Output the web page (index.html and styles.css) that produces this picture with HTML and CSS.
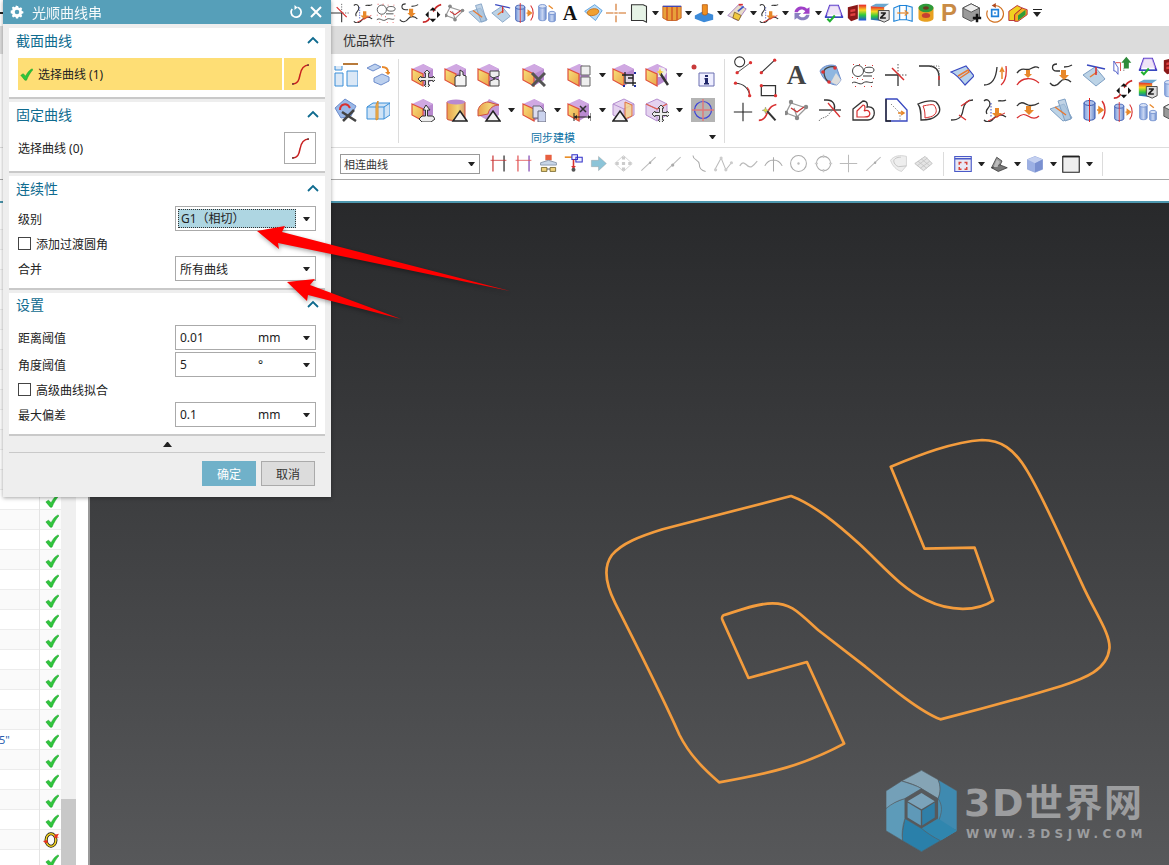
FILE: index.html
```
<!DOCTYPE html>
<html lang="zh">
<head>
<meta charset="utf-8">
<title>光顺曲线串</title>
<link rel="stylesheet" href="styles.css">
</head>
<body>
<svg class="sprite" xmlns="http://www.w3.org/2000/svg">
<defs>
<linearGradient id="gy" x1="0" y1="0" x2="1" y2="1"><stop offset="0" stop-color="#f7e27a"/><stop offset="1" stop-color="#eba24a"/></linearGradient>
<linearGradient id="gc" x1="0" y1="0" x2="1" y2="0"><stop offset="0" stop-color="#e9a04c"/><stop offset=".6" stop-color="#f2d677"/><stop offset="1" stop-color="#d59a70"/></linearGradient>
<linearGradient id="gb" x1="0" y1="0" x2="1" y2="0"><stop offset="0" stop-color="#7f9fdc"/><stop offset=".5" stop-color="#c8d6f2"/><stop offset="1" stop-color="#6d8dcc"/></linearGradient>
<linearGradient id="gr" x1="0" y1="0" x2="0" y2="1"><stop offset="0" stop-color="#e8202a"/><stop offset=".35" stop-color="#f5d920"/><stop offset=".65" stop-color="#2ecb3c"/><stop offset="1" stop-color="#2050e0"/></linearGradient>
</defs>
<symbol id="cube" viewBox="0 0 24 24"><path d="M12 1 22 6v11l-10 6z" fill="#b98ad0"/><path d="M12 1 1 6l11 5 10-5z" fill="#d0a8e2"/><path d="M1 6l11 5v12L1 17z" fill="url(#gy)" stroke="#e0503c" stroke-width="1.2"/></symbol>
<symbol id="arr4" viewBox="0 0 24 24"><path d="M16 7l3 3h-1.500v4.500H22V13l3 3-3 3v-1.500h-4.500V22H19l-3 3-3-3h1.500v-4.500H10V19l-3-3 3-3v1.500h4.500V10H13z" fill="#eee" stroke="#444"/></symbol>
<symbol id="tri" viewBox="0 0 24 24"><path d="M16 13l7 10H9z" fill="#f2f2f2" stroke="#222" stroke-width="1.500"/></symbol>
<symbol id="cmove" viewBox="0 0 24 24"><use href="#cube"/><use href="#arr4"/></symbol>
<symbol id="chand" viewBox="0 0 24 24"><use href="#cube"/><path d="M11 14v9h11V13l-3-1V9l-3-2v6l-2-1z" fill="#f4f4f4" stroke="#333"/></symbol>
<symbol id="cstrip" viewBox="0 0 24 24"><use href="#cube"/><path d="M13 8h9v5l-6 2 6 2v6h-9v-5l5-2-5-3z" fill="#eee" stroke="#444"/></symbol>
<symbol id="cx" viewBox="0 0 24 24"><use href="#cube"/><path d="M10 10l13 13M23 10 10 23" stroke="#555" stroke-width="3"/></symbol>
<symbol id="cpanel" viewBox="0 0 24 24"><use href="#cube"/><path d="M14 3h9v9h-9zM14 14h9v9h-9z" fill="#eee" stroke="#666"/></symbol>
<symbol id="ccrop" viewBox="0 0 24 24"><use href="#cube"/><path d="M12 12h9v9h-9z" fill="#eee" fill-opacity=".8"/><path d="M10 12h11v11M13 9v11h11M16 15h5" fill="none" stroke="#222" stroke-width="1.300"/><path d="M11 22h2v2h-2zM22 22h2v2h-2zM22 9h2v2h-2z" fill="#2030a0"/></symbol>
<symbol id="cwand" viewBox="0 0 24 24"><use href="#cube"/><path d="M14 4l5 1 3 4-3 5h-6z" fill="#eee"/><path d="M15 10l8 12" stroke="#333" stroke-width="2.500"/><path d="M15 5l1 3 3 1-3 1-1 3-1-3-3-1 3-1z" fill="#f5d040"/></symbol>
<symbol id="info" viewBox="0 0 24 24"><circle cx="3" cy="4" r="2.500" fill="#c83a3a"/><path d="M8 10h15v13H8z" fill="#eef" stroke="#6a6fb0"/><path d="M14 12h3v2h-3zM13.500 15H17v5h1v1.500h-5V20h1v-3.500h-.5z" fill="#22286a"/></symbol>
<symbol id="cup" viewBox="0 0 24 24"><use href="#cube"/><path d="M15 7l4 5h-2.500v6H22l2 3-4 3H11l-3-3 3-3h3.500v-6H12z" fill="#eee" stroke="#333"/></symbol>
<symbol id="ccyl" viewBox="0 0 24 24"><path d="M3 4v17c0 2 18 2 18 0V4z" fill="url(#gc)" stroke="#d05040"/><ellipse cx="12" cy="4" rx="9" ry="2.500" fill="#b98ad0"/><use href="#tri"/></symbol>
<symbol id="cround" viewBox="0 0 24 24"><path d="M12 1 22 6v11l-10 6L1 17z" fill="#c49ad8"/><path d="M1 18v-6c1-4 5-8 10-8l11 3c-5 0-10 3-11 9z" fill="url(#gc)" stroke="#d05040"/><use href="#tri"/></symbol>
<symbol id="cdoc" viewBox="0 0 24 24"><use href="#cube"/><path d="M11 8h7l3 3v9H11z" fill="#dde" stroke="#667"/><path d="M16 13h6l2 2v9h-8z" fill="#cbd3ee" stroke="#667"/></symbol>
<symbol id="cdim" viewBox="0 0 24 24"><use href="#cube"/><path d="M13 8l6 6m0-6-6 6" stroke="#333" stroke-width="1.500"/><path d="M7 19h17M7 15v8M24 15v8" stroke="#222" fill="none"/><path d="M7 19l3-2v4zM24 19l-3-2v4z" fill="#222"/></symbol>
<symbol id="wcube" viewBox="0 0 24 24"><path d="M12 1 22 6v11l-10 6L1 17V6z" fill="#e4d2ef" stroke="#b58fd0"/><path d="M1 6l11 5 10-5M12 11v12" fill="none" stroke="#b58fd0"/></symbol>
<symbol id="cwtri" viewBox="0 0 24 24"><use href="#wcube"/><path d="M13 4l7 3v11l-7 3z" fill="#f3d48a" fill-opacity=".8" stroke="#e07040"/><use href="#tri" x="-8" y="0"/></symbol>
<symbol id="cwmove" viewBox="0 0 24 24"><use href="#wcube"/><path d="M1 6l11 5 10-5" fill="none" stroke="#e06050" stroke-width="1.300"/><use href="#arr4"/></symbol>
<symbol id="target" viewBox="0 0 24 24"><rect width="24" height="24" fill="#b4b4b4"/><circle cx="12" cy="12" r="8.500" fill="none" stroke="#3a40d8" stroke-width="1.200"/><path d="M1 12h22M12 1v22" stroke="#e07a7a" stroke-width="1.500"/></symbol>
<symbol id="a1" viewBox="0 0 24 24"><path d="M1 3v4h7V3M1 10h8v13H1zM13 8h11v15H13z" fill="#dbe8f6" stroke="#3a8fd8"/><path d="M9 1h15" stroke="#b87a3a" stroke-width="2"/></symbol>
<symbol id="a2" viewBox="0 0 24 24"><path d="M1 5l8-4 6 3-8 4zM8 15l8-4 7 3v4l-8 4-7-3z" fill="#bcd0ee" stroke="#6d8dcc"/><path d="M16 4c4 0 6 2 6 5" fill="none" stroke="#e8882a" stroke-width="2"/><path d="M19 9h6l-3 3z" fill="#e8882a"/></symbol>
<symbol id="a3" viewBox="0 0 24 24"><path d="M1 10 11 1l11 7-5 10-10 2z" fill="#9ab8e8" stroke="#6d8dcc"/><path d="M6 12C6 6 13 4 16 10" fill="none" stroke="#d83030" stroke-width="2"/><path d="M8 14l14 9M20 12 9 23" stroke="#444" stroke-width="2.500"/></symbol>
<symbol id="a4" viewBox="0 0 24 24"><path d="M1 9l6-4h17v12l-6 4H1zM1 9h17v12M18 9l6-4" fill="#cfe3f6" stroke="#3a8fd8"/><path d="M12 3v18l-2 1V7z" fill="#f2c060" stroke="#d88a2a"/></symbol>
<symbol id="c1" viewBox="0 0 24 24"><circle cx="8" cy="7" r="6" fill="none" stroke="#333" stroke-width="1.300"/><path d="M5 20 21 8" stroke="#333"/><circle cx="5" cy="20" r="2" fill="#d33"/><circle cx="21" cy="8" r="2" fill="#d33"/></symbol>
<symbol id="c2" viewBox="0 0 24 24"><path d="M3 5c9 0 16 6 17 15" fill="none" stroke="#333" stroke-width="1.300"/><circle cx="3" cy="5" r="2" fill="#d33"/><circle cx="20" cy="20" r="2" fill="#d33"/><path d="M17 10c2 2 3 5 3 8" fill="none" stroke="#d33" stroke-width="1.500"/></symbol>
<symbol id="plus" viewBox="0 0 24 24"><path d="M1 12h22M12 1v22" stroke="#222" stroke-width="1.300"/></symbol>
<symbol id="d1" viewBox="0 0 24 24"><path d="M4 20 20 5" stroke="#333" stroke-width="1.300"/><circle cx="4" cy="20" r="2" fill="#d33"/><circle cx="20" cy="5" r="2" fill="#d33"/></symbol>
<symbol id="d2" viewBox="0 0 24 24"><path d="M4 8h17v12H4z" fill="none" stroke="#333" stroke-width="1.500"/><circle cx="4" cy="8" r="2" fill="#d33"/><circle cx="21" cy="20" r="2" fill="#d33"/></symbol>
<symbol id="d3" viewBox="0 0 24 24"><path d="M1 22c7 0 9-6 11-11 2-4 5-7 10-8" fill="none" stroke="#d83030" stroke-width="2"/><path d="M11 11l10 11" stroke="#333" stroke-width="2.500"/><path d="M9 6l1 3 3 1-3 1-1 3-1-3-3-1 3-1z" fill="#e0e040" stroke="#777" stroke-width=".5"/></symbol>
<symbol id="surf" viewBox="0 0 24 24"><path d="M2 8C5 2 14 1 18 3l5 14-4 5C12 22 5 17 2 8z" fill="#8fb6e0" stroke="#6d8dcc"/><path d="M18 10l5 7-4 5-6-3z" fill="#ddd"/><path d="M6 9c0-4 6-6 11-5M6 9c0 5 2 8 5 10" fill="none" stroke="#444" stroke-width="1.300"/><circle cx="5" cy="9" r="1.800" fill="#d33"/><circle cx="17" cy="5" r="1.800" fill="#d33"/><circle cx="11" cy="19" r="1.800" fill="#d33"/></symbol>
<symbol id="dots" viewBox="0 0 24 24"><circle cx="7" cy="8" r="5.500" fill="none" stroke="#444"/><ellipse cx="18" cy="7" rx="5" ry="2.800" fill="none" stroke="#444"/><path d="M12 13h9M1 20c4-3 7 3 11 0s7 1 10-1" fill="none" stroke="#333"/><path d="M2 1h1v1H2zM8 1h1v1H8zM14 2h1v1h-1zM21 2h1v1h-1zM1 14h1v1H1zM6 15h1v1H6zM11 16h1v1h-1zM22 15h1v1h-1zM4 23h1v1H4zM13 23h1v1h-1zM20 23h1v1h-1z" fill="#d33"/></symbol>
<symbol id="xtrim" viewBox="0 0 24 24"><path d="M1 12h13v11" fill="none" stroke="#333" stroke-width="1.300"/><path d="M14 1v10M15 12h9" fill="none" stroke="#555" stroke-dasharray="1.500 1.500"/><path d="M8 5l12 12" stroke="#d83030" stroke-width="1.500"/></symbol>
<symbol id="fillet" viewBox="0 0 24 24"><path d="M2 3h10c6 0 10 4 10 10v10" fill="none" stroke="#333" stroke-width="1.300"/><path d="M14 3h8v8" fill="none" stroke="#666" stroke-dasharray="1 1.500"/><path d="M22 13v4" stroke="#d33" stroke-width="1.500"/></symbol>
<symbol id="surfr" viewBox="0 0 24 24"><path d="M1 9l15-6 8 10-9 9C11 17 6 11 1 9z" fill="#b8d2ec" stroke="#3848c0" stroke-width="1.200"/><path d="M8 13 18 7l1 2-9 6" fill="none" stroke="#e87830" stroke-width="1.500"/></symbol>
<symbol id="jcurve" viewBox="0 0 24 24"><path d="M1 22c7 0 12-5 13-18" fill="none" stroke="#333" stroke-width="1.300"/><path d="M15 22c4-3 6-9 5-19" fill="none" stroke="#d83030" stroke-width="1.300" transform="translate(3 0)"/><path d="M19 16V6m-2 3 2-4 2 4" fill="none" stroke="#e8882a" stroke-width="1.500"/></symbol>
<symbol id="wavedn" viewBox="0 0 24 24"><path d="M1 10C6 3 10 8 14 6s6-3 9-1" fill="none" stroke="#333" stroke-width="1.300"/><path d="M1 22C6 14 16 14 23 20" fill="none" stroke="#d83030" stroke-width="1.300"/><path d="M10 7h4v4h2l-4 4-4-4h2z" fill="#e8882a"/></symbol>
<symbol id="sdn" viewBox="0 0 24 24"><path d="M8 1C2 1 2 8 8 8h3M15 4c3 0 5 0 8-2M1 20c3 4 7 3 10-1s8-3 11 0" fill="none" stroke="#333" stroke-width="1.300"/><path d="M12 7h5v5h3l-5 5-5-5h2z" fill="#e8882a"/></symbol>
<symbol id="plt" viewBox="0 0 24 24"><path d="M1 12 13 4l10 12-9 7z" fill="#bcd3e6" stroke="#7fa0c4"/><path d="M8 14l7-5" stroke="#e87830" stroke-width="1.500"/><path d="M5 2l18 4" stroke="#3848c0" stroke-width="1.500"/><path d="M14 4v8" stroke="#d83030" stroke-width="1.500"/></symbol>
<symbol id="poly" viewBox="0 0 24 24"><path d="M6 5 1 15l11 4 9-9zM12 19l-3-9 3 9" fill="none" stroke="#999" stroke-width="1.300"/><path d="M6 10l6 4 7-5" fill="none" stroke="#c83030" stroke-width="1.300"/><circle cx="6" cy="4" r="2.200" fill="#888"/><circle cx="1" cy="15" r="2.200" fill="#888"/><circle cx="12" cy="20" r="2.200" fill="#888"/><circle cx="21" cy="9" r="2.200" fill="#888"/></symbol>
<symbol id="tcurve" viewBox="0 0 24 24"><path d="M1 12h22" stroke="#333" stroke-width="1.300"/><path d="M6 2h3c6 0 9 5 7 10" fill="none" stroke="#333" stroke-width="1.300"/><path d="M1 23c3-5 7-2 10-7 1-2 3-3 4-4" fill="none" stroke="#777" stroke-dasharray="1.500 1"/><path d="M10 5l12 14" stroke="#d83030" stroke-width="1.300"/></symbol>
<symbol id="heart" viewBox="0 0 24 24"><path d="M2 11 12 3c6 0 4 6 4 6 6-1 8 3 7 8-1 3-3 5-6 5H2z" fill="none" stroke="#333" stroke-width="1.300"/><path d="M6 13l6-6c3 0 2 5 1 6 5-2 7 2 5 5-1 1-3 1-5 1H6z" fill="none" stroke="#d83030" stroke-width="1.200"/></symbol>
<symbol id="page" viewBox="0 0 24 24"><path d="M2 1h11l10 11v11H2z" fill="none" stroke="#3848c0" stroke-width="1.300"/><path d="M2 1v22h5" fill="none" stroke="#222" stroke-width="1.300"/><path d="M7 6l9 9v8" fill="none" stroke="#888" stroke-dasharray="1.500 1.500"/><path d="M14 15h6m-3-2 3 2-3 2" fill="none" stroke="#e8882a" stroke-width="1.500"/></symbol>
<symbol id="dshape" viewBox="0 0 24 24"><path d="M1 6c7-3 14-4 18-2 5 5 5 10 0 14-3 3-10 4-15 4C4 15 4 10 1 6z" fill="none" stroke="#333" stroke-width="1.300"/><path d="M6 8c5-1 9-2 11-1 3 4 3 8 0 10-2 2-5 2-9 3 0-4 0-8-2-12z" fill="none" stroke="#d83030"/></symbol>
<symbol id="scurve" viewBox="0 0 24 24"><path d="M1 22c8 0 11-3 12-10 1-7 4-10 10-10" fill="none" stroke="#333" stroke-width="1.300"/><path d="M9 17l7 5M11 8l9-6" stroke="#d83030" stroke-width="1.300"/></symbol>
<symbol id="sdn2" viewBox="0 0 24 24"><path d="M1 3c3-3 6 0 6 3 0 5-6 5-3 10M1 22c3 3 7 2 10-2s8-4 12-1M15 3c3-1 5 1 8-1" fill="none" stroke="#333" stroke-width="1.300"/><path d="M8 5v14" stroke="#3848c0" stroke-dasharray="1.500 1.500"/><path d="M12 10h4v5h3l-5 5-5-5h3z" fill="#e8882a"/><path d="M5 23 22 15" stroke="#d83030"/></symbol>
<symbol id="wavedn2" viewBox="0 0 24 24"><path d="M1 8c4-6 8-2 11-1s6 1 11-2" fill="none" stroke="#333" stroke-width="1.300"/><path d="M1 20c5-5 8-4 11-2s7 4 11 0" fill="none" stroke="#d83030" stroke-width="1.300"/><path d="M10 8h5v4h3l-5 5-5-5h2z" fill="#e8882a"/></symbol>
<symbol id="plr" viewBox="0 0 24 24"><path d="M1 11l14-5 8 14-9 3z" fill="#bcd3e6" stroke="#7fa0c4"/><path d="M9 3l7-2 6 20-6 2z" fill="#a8c2dc" fill-opacity=".7" stroke="#7fa0c4"/><path d="M6 9l11 8" stroke="#e87830" stroke-width="1.500"/></symbol>
<symbol id="cyla" viewBox="0 0 24 24"><path d="M2 5v15c0 3 11 3 11 0V5z" fill="url(#gb)" stroke="#3858b0"/><ellipse cx="7.500" cy="5" rx="5.500" ry="2.500" fill="#aac0ea" stroke="#3858b0"/><path d="M7.500 0v24" stroke="#e02828"/><path d="M15 12h4m-2-3 4 3-4 3z" fill="#e8882a" stroke="#e8882a" stroke-width="1.500"/><path d="M20 3c4 5 4 13 0 18" fill="none" stroke="#d83030" stroke-width="1.300"/></symbol>
<symbol id="cyl2" viewBox="0 0 24 24"><path d="M2 4v15c0 3 9 3 9 0V4z" fill="url(#gb)" stroke="#6d8dcc"/><ellipse cx="6.500" cy="4" rx="4.500" ry="2.200" fill="#d8e2f6" stroke="#6d8dcc"/><path d="M14 12v9c0 2 8 2 8 0v-9z" fill="url(#gb)" stroke="#6d8dcc"/><ellipse cx="18" cy="12" rx="4" ry="2" fill="#d8e2f6" stroke="#6d8dcc"/><path d="M14 3l5 4" stroke="#e8882a" stroke-width="1.500"/></symbol>
<symbol id="arrup" viewBox="0 0 24 24"><path d="M1 6v12h2l3 4V14z" fill="none" stroke="#3848c0"/><path d="M3 8h6v10" fill="none" stroke="#d83030"/><path d="M13 18v-3" stroke="#555" stroke-dasharray="1 1"/><path d="M16 1l6 7h-3v7h-6V8h-3z" fill="#2f8a3a"/></symbol>
<symbol id="trap" viewBox="0 0 24 24"><path d="M2 17 7 3h10l5 14" fill="none" stroke="#5030c8" stroke-width="2"/><path d="M7 3h10l4 11H3z" fill="#e8d8f4" fill-opacity=".7"/><path d="M1 17h22" stroke="#3848c0" stroke-width="2"/><path d="M4 19l3 3 6-7" fill="none" stroke="#20b030" stroke-width="2.500"/></symbol>
<symbol id="sdiam" viewBox="0 0 24 24"><path d="M1 23c8 0 8-6 12-12 2-4 5-8 10-9" fill="none" stroke="#c82828" stroke-width="2"/><path d="M6 15l6-6 7 7-6 6z" fill="#fff"/><path d="M13 5l4 4h-8zM13 23l-4-4h8zM4 14l4-4v8zM22 14l-4 4v-8z" fill="#111"/></symbol>
<symbol id="rainz" viewBox="0 0 24 24"><path d="M1 4h16v18l-16-2z" fill="url(#gr)"/><path d="M1 4l6-3h16l-6 4z" fill="#6aa7cf"/><path d="M10 9h13v11l-6 3-7-3z" fill="#ddd" stroke="#333"/><path d="M13 11h6v2l-4 4h4v2h-7v-2l4-4h-3z" fill="#222"/></symbol>
<symbol id="ell" viewBox="0 0 24 24"><path d="M2 10 14 2l9 7-8 12z" fill="#bcdcf4" stroke="#4a96dc"/><ellipse cx="12" cy="11" rx="7" ry="4" fill="#f0a030" stroke="#c87018" transform="rotate(-12 12 11)"/></symbol>
<symbol id="ocross" viewBox="0 0 24 24"><path d="M0 12h9M15 12h9M12 1v8M12 15v8" stroke="#d06a18" stroke-width="1.300"/><path d="M10 12h4" stroke="#d06a18" stroke-width="1.300"/></symbol>
<symbol id="sheet" viewBox="0 0 24 24"><path d="M3 2h14l4 2v19l-4-2H3z" fill="#e6f3e6" stroke="#333" stroke-width="1.300"/></symbol>
<symbol id="ocol" viewBox="0 0 24 24"><path d="M1 4h22v14l-6 3H7l-6-3z" fill="#e8a03a" stroke="#c05a1c"/><path d="M6 4v17M12 4v17M18 4v17" stroke="#d04820" stroke-width="1.500"/><path d="M1 4h22" stroke="#3848c0" stroke-width="1.500"/></symbol>
<symbol id="base" viewBox="0 0 24 24"><path d="M1 15l10-5 12 4v6l-11 3-11-4z" fill="#3c8ad8"/><path d="M10 2h6v11c0 2-6 2-6 0z" fill="#f09020" stroke="#b85a10"/></symbol>
<symbol id="wbox" viewBox="0 0 24 24"><path d="M1 15 14 2l9 5-10 14z" fill="#e8dcc8" stroke="#9a70c0"/><path d="M9 11l8 4-3 6-7-3z" fill="#f0c840" stroke="#806020"/><path d="M13 10l7-6" stroke="#3858c8" stroke-width="2"/><path d="M14 2l5 0" stroke="#d83030" stroke-width="2"/></symbol>
<symbol id="sync" viewBox="0 0 24 24"><path d="M3 11C4 4 13 2 18 7l3-2v8h-8l3-3C13 7 9 7 7 11z" fill="#a040c8"/><path d="M21 14c-1 7-10 9-15 4l-3 2v-8h8l-3 3c3 3 7 3 9-1z" fill="#8a80c0"/></symbol>
<symbol id="rain" viewBox="0 0 24 24"><path d="M1 5l12-3v17L5 22l-4-4z" fill="#8a1818"/><path d="M4 8l6-1v3l-6 1zM4 13l6-1v3l-6 1z" fill="#e04040"/><path d="M14 2h9v19h-9z" fill="url(#gr)"/></symbol>
<symbol id="bbox" viewBox="0 0 24 24"><path d="M1 6l7-3v17l-7 2zM16 3l7 2v17l-7-2z" fill="#eef6fc" stroke="#1c82d8" stroke-width="1.300"/><path d="M8 3h8M8 20h8" stroke="#1c82d8" stroke-width="1.300"/><path d="M5 12h11" stroke="#e8882a" stroke-width="1.500"/><path d="M14 9l4 3-4 3" fill="none" stroke="#e8882a" stroke-width="1.500"/></symbol>
<symbol id="ring" viewBox="0 0 24 24"><path d="M3 5v13c0 6 18 6 18 0V5z" fill="#e8a020"/><ellipse cx="12" cy="6" rx="9" ry="5" fill="#2f9a3a"/><ellipse cx="12" cy="15" rx="5" ry="3" fill="#c84030"/><ellipse cx="12" cy="6" rx="3.500" ry="2" fill="#6b3a20"/></symbol>
<symbol id="gcube" viewBox="0 0 24 24"><path d="M11 1 21 6v11L11 22 1 17V6z" fill="#999" stroke="#444"/><path d="M1 6l10-5 10 5-10 5z" fill="#eee" stroke="#444"/><path d="M13 18h10M18 13v10" stroke="#111" stroke-width="3"/></symbol>
<symbol id="rot" viewBox="0 0 24 24"><path d="M12 3a10 10 0 1 1-9 6" fill="none" stroke="#d07020" stroke-width="1.400"/><path d="M13 0v6L8 3z" fill="#b04a20"/><path d="M8 8h8v8H8z" fill="#fff" stroke="#2080d8" stroke-width="2"/><path d="M11 11h2v2h-2z" fill="#2080d8"/></symbol>
<symbol id="ybox" viewBox="0 0 24 24"><path d="M1 10l10-7 6 3-9 8v7H1z" fill="#f0d020" stroke="#b01830"/><path d="M8 14l9-8 6 2v6l-11 8H8z" fill="#f0b020" stroke="#b01830"/><path d="M12 15l9-7v6l-9 7z" fill="#2f9a3a"/></symbol>
<symbol id="h1" viewBox="0 0 24 24"><path d="M5 2v20" stroke="#c83030" stroke-width="1.500"/><path d="M19 2v20" stroke="#222" stroke-width="1.500"/><path d="M2 8h20" stroke="#c83030"/></symbol>
<symbol id="h2" viewBox="0 0 24 24"><path d="M5 2v20" stroke="#e05050" stroke-width="1.500"/><path d="M19 2v20" stroke="#7a40b0" stroke-width="1.500"/><path d="M2 8h20" stroke="#e05050"/></symbol>
<symbol id="net" viewBox="0 0 24 24"><path d="M8 1h8v7H8z" fill="#e86040"/><path d="M2 11l10-3 10 3v3H2z" fill="#c8d6e8" stroke="#7a8aa0"/><path d="M3 17h7v5H3zM14 17h7v5h-7z" fill="#f0d27a" stroke="#6a5a20"/><path d="M10 19h4" stroke="#444"/></symbol>
<symbol id="flow" viewBox="0 0 24 24"><path d="M1 4h9" stroke="#e88a20" stroke-width="2"/><path d="M10 1h7v6h-7zM15 4h8v6h-8z" fill="#eef" stroke="#3030c8" stroke-width="1.300"/><path d="M12 7v10" stroke="#d83030" stroke-width="2"/><path d="M9 15h6l-3 4z" fill="#d83030"/><circle cx="12" cy="20" r="2.500" fill="#555"/></symbol>
<symbol id="carrow" viewBox="0 0 24 24"><path d="M3 8h9V3l10 9-10 9v-5H3z" fill="#8cc4d8" stroke="#999" stroke-width=".5"/></symbol>
<symbol id="gdiam" viewBox="0 0 24 24"><path d="M12 2 23 12 12 22 1 12z" fill="none" stroke="#ccc"/><path d="M10 3h4v4h-4zM10 17h4v4h-4zM2 10h4v4H2zM18 10h4v4h-4zM10 10h4v4h-4z" fill="#ccc"/></symbol>
<symbol id="gline" viewBox="0 0 24 24"><path d="M3 21 21 4" stroke="#bbb" stroke-width="1.300"/><circle cx="14" cy="11" r="1.500" fill="#aaa"/></symbol>
<symbol id="gline2" viewBox="0 0 24 24"><path d="M3 21 21 4" stroke="#bbb" stroke-width="1.300"/><circle cx="11" cy="14" r="2" fill="#aaa"/></symbol>
<symbol id="gs" viewBox="0 0 24 24"><path d="M5 2c0 6 8 5 8 11 0 5 2 8 8 9" fill="none" stroke="#aaa" stroke-width="1.300"/></symbol>
<symbol id="gpoly" viewBox="0 0 24 24"><path d="M1 20 9 5l6 15 7-9" fill="none" stroke="#bbb" stroke-width="1.300"/><circle cx="9" cy="5" r="2" fill="#ccc"/><circle cx="15" cy="20" r="2" fill="#ccc"/><circle cx="2" cy="20" r="2" fill="#ccc"/><circle cx="22" cy="11" r="2" fill="#ccc"/></symbol>
<symbol id="gwave" viewBox="0 0 24 24"><path d="M1 15c4-7 6-3 10 0s6 1 12-6" fill="none" stroke="#bbb" stroke-width="1.600"/></symbol>
<symbol id="garc" viewBox="0 0 24 24"><path d="M1 15C6 5 18 5 23 15M12 4v18" fill="none" stroke="#aaa" stroke-width="1.300"/></symbol>
<symbol id="gc1" viewBox="0 0 24 24"><circle cx="12" cy="12" r="10" fill="none" stroke="#aaa" stroke-width="1.300"/><circle cx="12" cy="12" r="1.500" fill="#bbb"/></symbol>
<symbol id="gc2" viewBox="0 0 24 24"><circle cx="12" cy="12" r="9" fill="none" stroke="#aaa" stroke-width="1.300"/><path d="M11 1h2v4h-2zM11 19h2v4h-2zM1 11h4v2H1zM19 11h4v2h-4z" fill="#ccc"/></symbol>
<symbol id="gplus" viewBox="0 0 24 24"><path d="M1 12h22M12 1v22" stroke="#bbb" stroke-width="1.300"/></symbol>
<symbol id="gsurf" viewBox="0 0 24 24"><path d="M2 8c4-6 12-7 20-5v12l-6 7C10 21 4 15 2 8z" fill="#eee" stroke="#ccc"/><path d="M15 4c-5 0-9 2-9 5s3 6 6 7l10-1" fill="none" stroke="#bbb"/></symbol>
<symbol id="gmesh" viewBox="0 0 24 24"><path d="M1 12 14 3l9 9-11 9z" fill="#e4e4e4" stroke="#bbb"/><path d="M5 9l11 9M9 6l11 9M4 15 17 5M8 18 20 9" stroke="#bbb" stroke-width=".8"/></symbol>
<symbol id="fit" viewBox="0 0 24 24"><path d="M1 2h22v20H1z" fill="#e8e8f4" stroke="#4a5ac8" stroke-width="1.500"/><path d="M1 5h22" stroke="#4a5ac8" stroke-width="2"/><path d="M6 9h4v2H8v2H6zM18 9h-4v2h2v2h2zM6 20h4v-2H8v-2H6zM18 20h-4v-2h2v-2h2z" fill="#d8453a"/></symbol>
<symbol id="shade" viewBox="0 0 24 24"><path d="M2 17 9 3l7 5-5 11z" fill="#999" stroke="#333"/><path d="M2 17l9 5 12-5-10-4z" fill="#777" stroke="#333"/><path d="M9 6l4 3-3 7-5 0z" fill="#bbb"/></symbol>
<symbol id="bcube" viewBox="0 0 24 24"><path d="M2 6l10-4 10 4v13l-10 4-10-4z" fill="#9cb0e4" stroke="#8ea3da"/><path d="M2 6l10 5 10-5-10-4z" fill="#c4d0f0"/><path d="M12 11v12l10-4V6z" fill="#7a90d0"/></symbol>
<symbol id="win" viewBox="0 0 24 24"><path d="M1 2h22v21H1z" fill="#eee" stroke="#222" stroke-width="1.500"/><path d="M1 2h22" stroke="#222" stroke-width="2.500"/></symbol>
<symbol id="ok" viewBox="0 0 16 16"><path d="M1 9l3-2 3 3c2-4 4-7 8-9l1 1c-3 3-6 8-8 13H6z" fill="#2fc63c" stroke="#159a24" stroke-width=".6"/></symbol>
<symbol id="spin" viewBox="0 0 18 18"><ellipse cx="9" cy="9" rx="5.500" ry="7" fill="none" stroke="#111" stroke-width="3.500"/><ellipse cx="9" cy="9" rx="5.500" ry="7" fill="none" stroke="#f0d020" stroke-width="1.800"/><path d="M13 3l5-1-2 3 2 1-5 1zM0 10l5-1v4l-3-1z" fill="#e83020"/></symbol>
<symbol id="sc" viewBox="0 0 24 24"><path d="M4 22c6 0 7-4 8-9 1-6 3-10 9-10" fill="none" stroke="#c82020" stroke-width="1.500"/><path d="M4 22h2M19 3h2" stroke="#444" stroke-width="1"/></symbol>
</svg>

<div class="app">
  <div class="topbar">
    <svg class="ti"><use href="#xtrim"/></svg><svg class="ti"><use href="#sdn2"/></svg><svg class="ti"><use href="#dots"/></svg><svg class="ti"><use href="#sdn"/></svg><svg class="ti"><use href="#sdiam"/></svg><svg class="ti"><use href="#poly"/></svg><svg class="ti"><use href="#plr"/></svg><svg class="ti"><use href="#plt"/></svg><svg class="ti"><use href="#cyla"/></svg><svg class="ti"><use href="#cyl2"/></svg>
    <span class="glyph-a">A</span>
    <svg class="ti"><use href="#ell"/></svg><svg class="ti"><use href="#ocross"/></svg><svg class="ti"><use href="#sheet"/></svg><i class="caret tc"></i>
    <svg class="ti"><use href="#ocol"/></svg><i class="caret tc"></i>
    <svg class="ti"><use href="#base"/></svg><i class="caret tc"></i>
    <svg class="ti"><use href="#wbox"/></svg><i class="caret tc"></i>
    <svg class="ti"><use href="#sdn2"/></svg><i class="caret tc"></i>
    <svg class="ti"><use href="#sync"/></svg><i class="caret tc"></i>
    <svg class="ti"><use href="#trap"/></svg><svg class="ti"><use href="#rain"/></svg><svg class="ti"><use href="#rainz"/></svg><svg class="ti"><use href="#bbox"/></svg><svg class="ti"><use href="#ring"/></svg>
    <span class="glyph-p">P</span>
    <svg class="ti"><use href="#gcube"/></svg><svg class="ti"><use href="#rot"/></svg><svg class="ti"><use href="#ybox"/></svg>
    <i class="more"></i>
  </div>
  <div class="tabs"><span class="tab">优品软件</span></div>
  <div class="ribbon">
    <div class="grid-a">
      <svg class="ri"><use href="#a1"/></svg><svg class="ri"><use href="#a2"/></svg><svg class="ri"><use href="#a3"/></svg><svg class="ri"><use href="#a4"/></svg>
    </div>
    <div class="sep"></div>
    <div class="group-b">
      <div class="grid-b">
        <svg class="ri"><use href="#cmove"/></svg><svg class="ri"><use href="#chand"/></svg><svg class="ri"><use href="#cstrip"/></svg><i></i><svg class="ri"><use href="#cx"/></svg><i></i><svg class="ri"><use href="#cpanel"/></svg><i class="caret"></i><svg class="ri"><use href="#ccrop"/></svg><svg class="ri"><use href="#cwand"/></svg><i class="caret"></i><svg class="ri"><use href="#info"/></svg>
        <svg class="ri"><use href="#cup"/></svg><svg class="ri"><use href="#ccyl"/></svg><svg class="ri"><use href="#cround"/></svg><i class="caret"></i><svg class="ri"><use href="#cdoc"/></svg><i class="caret"></i><svg class="ri"><use href="#cdim"/></svg><i class="caret"></i><svg class="ri"><use href="#cwtri"/></svg><svg class="ri"><use href="#cwmove"/></svg><i class="caret"></i><svg class="ri"><use href="#target"/></svg>
      </div>
      <div class="group-label"><span class="label-text">同步建模</span><i class="caret"></i></div>
    </div>
    <div class="sep sep-b"></div>
    <div class="group-c">
      <div class="col3"><svg class="si"><use href="#c1"/></svg><svg class="si"><use href="#c2"/></svg><svg class="si"><use href="#plus"/></svg></div>
      <div class="col3"><svg class="si"><use href="#d1"/></svg><svg class="si"><use href="#d2"/></svg><svg class="si"><use href="#d3"/></svg></div>
      <div class="col2"><span class="big-a">A</span><svg class="ri"><use href="#poly"/></svg></div>
      <div class="col2"><svg class="ri"><use href="#surf"/></svg><svg class="ri"><use href="#tcurve"/></svg></div>
      <div class="col2"><svg class="ri"><use href="#dots"/></svg><svg class="ri"><use href="#heart"/></svg></div>
      <div class="col2"><svg class="ri"><use href="#xtrim"/></svg><svg class="ri"><use href="#page"/></svg></div>
      <div class="col2"><svg class="ri"><use href="#fillet"/></svg><svg class="ri"><use href="#dshape"/></svg></div>
      <div class="col2"><svg class="ri"><use href="#surfr"/></svg><svg class="ri"><use href="#scurve"/></svg></div>
      <div class="col2"><svg class="ri"><use href="#jcurve"/></svg><svg class="ri"><use href="#sdn2"/></svg></div>
      <div class="col2"><svg class="ri"><use href="#wavedn"/></svg><svg class="ri"><use href="#wavedn2"/></svg></div>
      <div class="col2"><svg class="ri"><use href="#sdn"/></svg><svg class="ri"><use href="#plr"/></svg></div>
      <div class="col2"><svg class="ri"><use href="#plt"/></svg><svg class="ri"><use href="#cyla"/></svg></div>
      <div class="col3"><svg class="si"><use href="#arrup"/></svg><svg class="si"><use href="#sdiam"/></svg><svg class="si"><use href="#cyla"/></svg></div>
      <div class="col3"><svg class="si"><use href="#trap"/></svg><svg class="si"><use href="#rainz"/></svg><svg class="si"><use href="#cyl2"/></svg></div>
      <div class="col3"><svg class="si"><use href="#rain"/></svg><svg class="si"><use href="#cyl2"/></svg><svg class="si"><use href="#gcube"/></svg></div>
    </div>
  </div>
  <div class="cmd">
    <div class="cmd-select"><span>相连曲线</span><i class="caret"></i></div>
    <div class="cmd-icons">
      <svg class="ci"><use href="#h1"/></svg><svg class="ci"><use href="#h2"/></svg><svg class="ci"><use href="#net"/></svg><svg class="ci"><use href="#flow"/></svg><svg class="ci"><use href="#carrow"/></svg><svg class="ci"><use href="#gdiam"/></svg><svg class="ci"><use href="#gline"/></svg><svg class="ci"><use href="#gline2"/></svg><svg class="ci"><use href="#gs"/></svg><svg class="ci"><use href="#gpoly"/></svg><svg class="ci"><use href="#gwave"/></svg><svg class="ci"><use href="#garc"/></svg><svg class="ci"><use href="#gc1"/></svg><svg class="ci"><use href="#gc2"/></svg><svg class="ci"><use href="#gplus"/></svg><svg class="ci"><use href="#gline"/></svg><svg class="ci"><use href="#gsurf"/></svg><svg class="ci"><use href="#gmesh"/></svg>
    </div>
    <div class="cmd-sep"></div>
    <div class="cmd-view">
      <svg class="vi"><use href="#fit"/></svg><i class="caret"></i><svg class="vi"><use href="#shade"/></svg><i class="caret"></i><svg class="vi"><use href="#bcube"/></svg><i class="caret"></i><svg class="vi"><use href="#win"/></svg><i class="caret"></i>
    </div>
    <div class="cmd-sep"></div>
  </div>
  <div class="spacer"></div>
  <div class="main">
    <aside class="side">
      <div class="list">
        <div class="row"></div><div class="row alt"></div><div class="row"></div><div class="row alt"></div><div class="row"></div><div class="row alt"></div><div class="row"></div><div class="row alt"></div><div class="row"></div><div class="row alt"></div><div class="row"></div><div class="row alt"></div><div class="row"></div><div class="row alt"></div>
        <div class="row"><span class="cell"></span><svg class="ok"><use href="#ok"/></svg></div>
        <div class="row alt"><span class="cell"></span><svg class="ok"><use href="#ok"/></svg></div>
        <div class="row"><span class="cell"></span><svg class="ok"><use href="#ok"/></svg></div>
        <div class="row alt"><span class="cell"></span><svg class="ok"><use href="#ok"/></svg></div>
        <div class="row"><span class="cell"></span><svg class="ok"><use href="#ok"/></svg></div>
        <div class="row alt"><span class="cell"></span><svg class="ok"><use href="#ok"/></svg></div>
        <div class="row"><span class="cell"></span><svg class="ok"><use href="#ok"/></svg></div>
        <div class="row alt"><span class="cell"></span><svg class="ok"><use href="#ok"/></svg></div>
        <div class="row"><span class="cell"></span><svg class="ok"><use href="#ok"/></svg></div>
        <div class="row alt"><span class="cell"></span><svg class="ok"><use href="#ok"/></svg></div>
        <div class="row"><span class="cell"></span><svg class="ok"><use href="#ok"/></svg></div>
        <div class="row alt"><span class="cell"></span><svg class="ok"><use href="#ok"/></svg></div>
        <div class="row"><span class="cell cell-text">5"</span><svg class="ok"><use href="#ok"/></svg></div>
        <div class="row alt"><span class="cell"></span><svg class="ok"><use href="#ok"/></svg></div>
        <div class="row"><span class="cell"></span><svg class="ok"><use href="#ok"/></svg></div>
        <div class="row alt"><span class="cell"></span><svg class="ok"><use href="#ok"/></svg></div>
        <div class="row"><span class="cell"></span><svg class="ok"><use href="#ok"/></svg></div>
        <div class="row alt"><span class="cell"></span><svg class="spin"><use href="#spin"/></svg></div>
        <div class="row"><span class="cell"></span><svg class="ok"><use href="#ok"/></svg></div>
      </div>
      <div class="scroll"><div class="thumb"></div></div>
    </aside>
    <div class="viewport">
      <svg class="curve" viewBox="0 0 1568 1080" preserveAspectRatio="none" xmlns="http://www.w3.org/2000/svg"><path d="M875 110C960 75 1060 35 1145 30 1200 30 1240 55 1280 125 1330 210 1380 330 1440 460 1480 550 1525 610 1522 655 1515 720 1450 745 1380 768 1260 805 1140 838 1022 868 960 845 860 760 800 710L660 600C600 545 580 520 525 520 480 520 430 540 380 556 373 562 375 566 378 572L454 744 627 696 737 941C620 1005 520 1030 367 1057 320 1015 280 975 250 915 200 800 120 640 60 520 30 460 25 410 50 375 80 340 130 320 200 298L580 198C650 225 720 285 780 340 850 405 900 470 980 510 1050 545 1130 545 1178 512L1123 353 975 356Z"/></svg>
      <div class="logo">
        <svg class="logo-mark" viewBox="48 30 214 245" xmlns="http://www.w3.org/2000/svg">
          <path d="M155 30 262 92v120l-107 63L48 212V92z" fill="#4a90b2"/>
          <g stroke="#56595c" stroke-width="2">
            <path d="M95 62 155 30 205 58c10 20 8 40 0 57L155 85c-20-12-40-18-60-23z" fill="#85a4b5"/>
            <path d="M205 58l57 34v120l-57-25c12-30 15-50 0-72 8-20 8-37 0-57z" fill="#3f8ab0"/>
            <path d="M262 212l-50 30c-20-10-40-22-57-37l50-30z" fill="#3086ae" stroke="none"/>
            <path d="M212 242l-57 33-57-33c-3-20 2-38 7-67l50 30c18 15 37 27 57 37z" fill="#2a80aa"/>
            <path d="M98 242 48 212V140c20-12 40-20 57-25v60c-8 25-10 47-7 67z" fill="#5d9bb9"/>
            <path d="M48 145V92l47-30c25 8 45 14 60 23l-50 30c-22 6-40 16-57 30z" fill="#74a0b8"/>
          </g>
          <path d="M155 85l50 30v60l-50 30-50-30v-60z" fill="#56595c"/>
          <path d="M155 98l40 25-40 24-42-24z" fill="#7ba3ba"/>
          <path d="M113 127l40 24v45l-40-24z" fill="#5f99b8"/>
          <path d="M157 151l38-24v45l-38 24z" fill="#2f7fa8"/>
        </svg>
        <div class="logo-text">
          <div class="logo-name"><span class="logo-3d">3D</span>世界网</div>
          <div class="logo-url">WWW.3DSJW.COM</div>
        </div>
      </div>
    </div>
  </div>

  <section class="dialog">
    <header class="dlg-title">
      <svg class="dlg-gear" viewBox="0 0 16 16"><path d="M8 1l1.300.2.400 1.700 1.300.6 1.500-.9 1.500 1.600-.9 1.400.5 1.300 1.700.4v2.200l-1.700.4-.5 1.300.9 1.500-1.500 1.500-1.500-.9-1.300.5-.4 1.700H6.800l-.4-1.700-1.300-.5-1.500.9-1.500-1.500.9-1.500-.5-1.300-1.700-.4V6.300l1.700-.4.500-1.300-.9-1.400 1.500-1.600 1.500.9 1.300-.6.400-1.700z" fill="#fff"/><circle cx="8" cy="8" r="2.600" fill="#569fb9"/></svg>
      <span class="dlg-name">光顺曲线串</span>
      <svg class="dlg-btn" viewBox="0 0 14 14"><path d="M8.500 2.300A5 5 0 1 1 3.200 4" fill="none" stroke="#fff" stroke-width="1.700"/><path d="M5.500 0v5l3-2.500z" fill="#fff"/></svg>
      <svg class="dlg-btn" viewBox="0 0 14 14"><path d="M2 2l10 10M12 2 2 12" stroke="#fff" stroke-width="2"/></svg>
    </header>
    <div class="dlg-body">
      <div class="sec">
        <div class="sec-head"><span>截面曲线</span><svg class="chev" viewBox="0 0 12 8"><path d="M1 7l5-5 5 5" fill="none" stroke="#0f6b8f" stroke-width="1.800"/></svg></div>
        <div class="pick">
          <div class="pick-label"><svg class="pick-ok"><use href="#ok"/></svg><span>选择曲线 (1)</span></div>
          <div class="pick-btn active"><svg class="pick-ic"><use href="#sc"/></svg></div>
        </div>
      </div>
      <div class="sec">
        <div class="sec-head"><span>固定曲线</span><svg class="chev" viewBox="0 0 12 8"><path d="M1 7l5-5 5 5" fill="none" stroke="#0f6b8f" stroke-width="1.800"/></svg></div>
        <div class="pick">
          <div class="pick-plain"><span>选择曲线 (0)</span></div>
          <div class="pick-btn"><svg class="pick-ic"><use href="#sc"/></svg></div>
        </div>
      </div>
      <div class="sec">
        <div class="sec-head"><span>连续性</span><svg class="chev" viewBox="0 0 12 8"><path d="M1 7l5-5 5 5" fill="none" stroke="#0f6b8f" stroke-width="1.800"/></svg></div>
        <div class="field"><span class="f-label">级别</span><div class="f-select"><span class="f-hl">G1（相切）</span><i class="caret"></i></div></div>
        <label class="check"><i class="box"></i><span>添加过渡圆角</span></label>
        <div class="field"><span class="f-label">合并</span><div class="f-select"><span class="f-val f-grow">所有曲线</span><i class="caret"></i></div></div>
      </div>
      <div class="sec sec-set">
        <div class="sec-head tall"><span>设置</span><svg class="chev" viewBox="0 0 12 8"><path d="M1 7l5-5 5 5" fill="none" stroke="#0f6b8f" stroke-width="1.800"/></svg></div>
        <div class="field gap"><span class="f-label">距离阈值</span><div class="f-select"><span class="f-val">0.01</span><span class="f-unit">mm</span><i class="caret"></i></div></div>
        <div class="field"><span class="f-label">角度阈值</span><div class="f-select"><span class="f-val">5</span><span class="f-unit">°</span><i class="caret"></i></div></div>
        <label class="check"><i class="box"></i><span>高级曲线拟合</span></label>
        <div class="field"><span class="f-label">最大偏差</span><div class="f-select"><span class="f-val">0.1</span><span class="f-unit">mm</span><i class="caret"></i></div></div>
      </div>
      <div class="fold"><i class="caret-up"></i></div>
      <div class="actions"><button class="btn primary" type="button">确定</button><button class="btn" type="button">取消</button></div>
    </div>
  </section>

  <svg class="arrows" viewBox="0 0 1169 865" xmlns="http://www.w3.org/2000/svg">
    <path d="M257 231 285 226 282 232 510 291 278 243 279 249z"/>
    <path d="M287 282 315 279 310 285 401 319 308 295 307 301z"/>
  </svg>
</div>
</body>
</html>
```

FILE: styles.css
```
* { box-sizing: border-box; }
html, body { margin: 0; padding: 0; }
body { font-family: "Noto Sans", "Noto Sans CJK SC", sans-serif; font-size: 12px; color: #333; background: #fff; }
.sprite { display: block; width: 0; height: 0; overflow: hidden; }
.app { position: relative; width: 1169px; height: 865px; overflow: hidden; display: flex; flex-direction: column; background: #fff; }
i { display: block; }

.caret { width: 7px; height: 4px; border-left: 3.5px solid transparent; border-right: 3.5px solid transparent; border-top: 4px solid #222; flex: none; }

.topbar { height: 26px; flex: none; display: flex; align-items: center; }
.topbar::before { content: ""; width: 3px; height: 2px; background: #222; margin-right: 325.5px; flex: none; }
.ti { width: 20px; height: 20px; margin: 0 1.5px; flex: none; }
.tc { margin: 0 1px 0 1.5px; }
.glyph-a { width: 23px; text-align: center; font: bold 20px/20px "Liberation Serif", serif; color: #111; flex: none; }
.glyph-p { width: 23px; text-align: center; font: bold 24px/24px "Liberation Sans", sans-serif; color: #c98b45; flex: none; }
.more { width: 9px; height: 8px; margin-left: 3px; border-top: 1px solid #222; }
.more::after { content: ""; display: block; margin: 2px 0 0 0; width: 0; border-left: 4.5px solid transparent; border-right: 4.5px solid transparent; border-top: 5px solid #222; }

.tabs { height: 28px; flex: none; background: #dcdcdc; display: flex; align-items: center; padding: 0 0 2px 343px; }
.tab { font-size: 13px; color: #333; }

.ribbon { height: 94px; flex: none; display: flex; padding-left: 334px; border-bottom: 1px solid #ddd; }
.ri { width: 24px; height: 24px; flex: none; }
.grid-a { display: grid; grid-template-columns: 32px 32px; grid-auto-rows: 35px; align-items: center; padding-top: 3px; align-content: start; }
.sep { width: 1px; height: 84px; margin-top: 5px; background: #dcdcdc; flex: none; }
.group-b { width: 304px; margin-left: 12px; display: flex; flex-direction: column; padding-top: 3px; flex: none; }
.grid-b { display: grid; grid-template-columns: 33px 33px 28px 17px 29px 16px 29px 16px 33px 28px 18px 24px; grid-auto-rows: 35px; align-items: center; }
.grid-b .caret { margin-left: 3px; }
.group-label { display: flex; align-items: center; height: 20px; }
.label-text { flex: none; width: 284px; text-align: center; font-size: 11px; color: #0c72a5; }
.group-label .caret { margin-left: 14px; }
.sep-b { margin-left: 9px; }
.group-c { display: flex; margin-left: 5px; flex: none; }
.col3 { width: 25px; display: flex; flex-direction: column; align-items: center; flex: none; }
.si { width: 20px; height: 20px; margin: 1.5px 0; flex: none; }
.col2 { width: 33px; display: flex; flex-direction: column; align-items: center; padding-top: 3px; flex: none; }
.col2 > * { margin: 5.5px 0; }
.big-a { height: 24px; font: bold 27px/24px "Liberation Serif", serif; color: #444; }

.cmd { height: 32px; flex: none; display: flex; align-items: center; padding-left: 340px; border-bottom: 1px solid #a8a8a8; }
.cmd-select { width: 140px; height: 20px; border: 1px solid #999; display: flex; align-items: center; justify-content: space-between; padding: 0 4px 0 3px; font-size: 11px; flex: none; }
.cmd-icons { display: flex; margin-left: 6px; flex: none; }
.ci { width: 19px; height: 19px; margin: 0 3px; flex: none; }
.cmd-sep { width: 1px; height: 24px; background: #dcdcdc; margin-left: 7px; flex: none; }
.cmd-view { display: flex; align-items: center; margin-left: 7px; flex: none; }
.vi { width: 18px; height: 18px; margin: 0 3px; flex: none; }
.cmd-view .caret { margin: 0 2.5px; }

.spacer { height: 21px; flex: none; }
.main { flex: 1; min-height: 0; display: flex; border-top: 2px solid #4d97ae; }

.side { width: 90px; flex: none; display: flex; background: #fff; border-right: 2px solid #999; padding-right: 12px; }
.list { width: 61px; padding-top: 7px; flex: none; }
.row { height: 20px; display: flex; align-items: center; border-bottom: 1px solid #ececec; }
.row.alt { background: #fafafa; }
.cell { width: 40px; height: 20px; flex: none; border-right: 1px solid #e4e4e4; font-size: 11px; line-height: 19px; }
.cell-text { color: #2a5fb0; text-indent: -1px; }
.ok { width: 14px; height: 14px; margin: 2px 0 0 5px; flex: none; }
.spin { width: 16px; height: 16px; margin-left: 3px; flex: none; }
.scroll { width: 15px; background: #f0f0f0; display: flex; flex-direction: column; justify-content: flex-end; flex: none; }
.thumb { height: 66px; background: #c8c8c8; }

.viewport { position: relative; flex: 1; background: linear-gradient(#28292b, #57585a); overflow: hidden; }
.curve { position: absolute; left: 505px; top: 227px; width: 530px; height: 360px; fill: none; stroke: #f39c3d; stroke-width: 8; stroke-linejoin: round; }
.logo { position: absolute; left: 796px; top: 567px; display: flex; align-items: flex-start; gap: 7px; }
.logo-mark { width: 71px; height: 82px; flex: none; }
.logo-text { padding-top: 9px; color: #9c9d9f; white-space: nowrap; }
.logo-name { font: bold 38px/42px "Noto Sans CJK SC", sans-serif; letter-spacing: 1.5px; }
.logo-3d { font-family: "DejaVu Sans", sans-serif; }
.logo-url { font: bold 12px/14px "DejaVu Sans", sans-serif; letter-spacing: 4.5px; margin: 3px 0 0 2px; }

.dialog { position: absolute; left: 3px; top: 0; width: 328px; height: 497px; background: #eeeeee; box-shadow: 0 1px 4px rgba(0, 0, 0, .35); display: flex; flex-direction: column; }
.dlg-title { height: 24px; flex: none; background: #569fb9; display: flex; align-items: center; padding: 0 8px 0 7px; color: #fff; }
.dlg-gear { width: 14px; height: 14px; flex: none; }
.dlg-name { font-size: 14px; margin-left: 8px; flex: 1; opacity: .95; }
.dlg-btn { width: 14px; height: 14px; margin-left: 6px; flex: none; }
.dlg-body { padding: 4px 6px 0; display: flex; flex-direction: column; }
.sec { background: #fff; border-bottom: 2px solid #c9c9c9; margin-bottom: 3px; padding: 0 9px 7px; }
.sec-set { margin-bottom: 0; }
.sec-head { height: 30px; display: flex; align-items: center; justify-content: space-between; margin: 0 -3px 0 -2px; padding-bottom: 6px; font-size: 14px; color: #0f6b8f; }
.sec-head.tall { height: 32px; padding-bottom: 11px; }
.chev { width: 12px; height: 8px; flex: none; }
.pick { display: flex; height: 32px; gap: 2px; }
.pick-label { flex: 1; background: #fede75; display: flex; align-items: center; padding-left: 2px; color: #222; }
.pick-ok { width: 13px; height: 13px; margin-right: 5px; flex: none; }
.pick-plain { flex: 1; display: flex; align-items: center; color: #222; }
.pick-btn { width: 32px; border: 1px solid #aaa; display: flex; align-items: center; justify-content: center; flex: none; }
.pick-btn.active { background: #fede75; border: 0; }
.pick-ic { width: 24px; height: 24px; }
.field { display: flex; align-items: center; justify-content: space-between; height: 25px; color: #222; }
.field.gap { margin-bottom: 2px; }
.f-label { flex: none; }
.f-select { width: 141px; height: 25px; border: 1px solid #aaa; display: flex; align-items: center; padding: 0 2px; flex: none; background: #fff; }
.f-hl { width: 118px; height: 19px; background: #aed6e2; border: 1px dotted #333; line-height: 17px; padding-left: 2px; flex: none; }
.f-select .caret { margin-left: auto; margin-right: 3px; }
.f-val { width: 80px; padding-left: 2px; flex: none; }
.f-grow { width: auto; }
.f-unit { flex: none; }
.check { display: flex; align-items: center; height: 25px; color: #222; }
.box { width: 13px; height: 13px; border: 1px solid #444; margin-right: 5px; flex: none; background: #fff; }
.fold { height: 17px; border-bottom: 1px solid #c9c9c9; display: flex; align-items: center; justify-content: center; }
.caret-up { width: 9px; height: 5px; border-left: 4.5px solid transparent; border-right: 4.5px solid transparent; border-bottom: 5px solid #222; }
.actions { display: flex; justify-content: flex-end; gap: 5px; margin-top: 8px; padding-right: 10px; }
.btn { width: 54px; height: 25px; border: 1px solid #aaa; background: #dcdcdc; color: #333; font: 12px "Noto Sans CJK SC", sans-serif; padding: 0; }
.btn.primary { background: #70b1c9; border-color: #70b1c9; color: #fff; }

.arrows { position: absolute; left: 0; top: 0; width: 1169px; height: 865px; fill: #ff0000; filter: drop-shadow(1px 2px 2px rgba(0, 0, 0, .35)); pointer-events: none; }
```
